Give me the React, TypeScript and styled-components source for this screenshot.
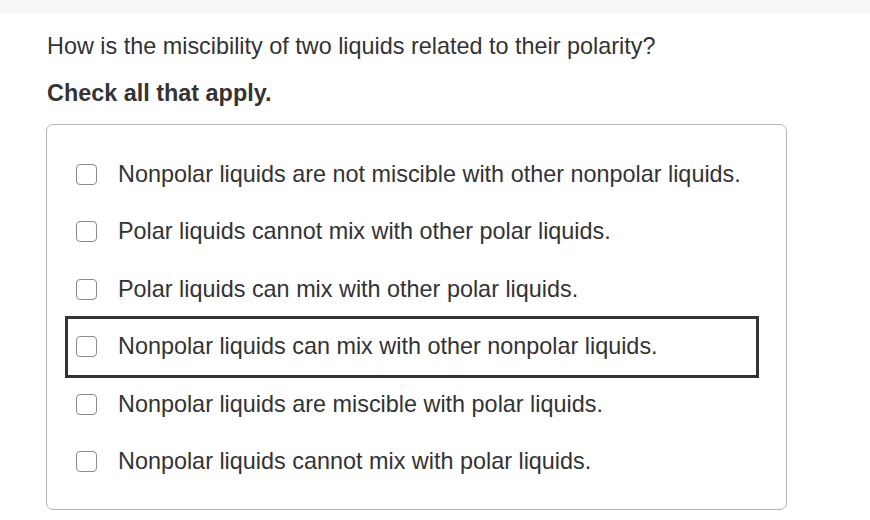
import React, { useState } from 'react';
import styled, { createGlobalStyle } from 'styled-components';

const GlobalStyle = createGlobalStyle`
  html, body {
    margin: 0;
    padding: 0;
    background: #fff;
    font-family: "Liberation Sans", Arial, sans-serif;
    color: #333;
  }
`;

const TopBar = styled.div`
  height: 13px;
  background-color: #f7f7f7;
`;

const Content = styled.div`
  padding: 20px 0 0 47px;
`;

const Question = styled.p`
  margin: 0;
  font-size: 23.4px;
  line-height: 27px;
  color: #333;
`;

const Instruction = styled.p`
  margin: 19.5px 0 0;
  font-size: 23.4px;
  line-height: 27px;
  font-weight: bold;
  color: #333;
`;

const ChoiceBox = styled.div`
  box-sizing: border-box;
  margin: 17.5px 0 0 -1px;
  width: 741px;
  height: 386px;
  border: 1px solid #b5b5b5;
  border-radius: 7px;
  padding: 21px 30px 0 21px;
  display: flex;
  flex-direction: column;
  gap: 1.5px;
`;

const Row = styled.label<{ $focused: boolean }>`
  display: flex;
  align-items: center;
  gap: 21px;
  height: 56px;
  padding-left: 8px;
  cursor: pointer;
  outline: ${(p) => (p.$focused ? '3px solid #333' : 'none')};
`;

const Box = styled.span`
  box-sizing: border-box;
  width: 21px;
  height: 21px;
  flex-shrink: 0;
  border: 1.5px solid #8a8a8a;
  border-radius: 4px;
  background: #fff;
`;

const RowText = styled.span`
  font-size: 23.4px;
  line-height: 27px;
  color: #333;
`;

const options = [
  'Nonpolar liquids are not miscible with other nonpolar liquids.',
  'Polar liquids cannot mix with other polar liquids.',
  'Polar liquids can mix with other polar liquids.',
  'Nonpolar liquids can mix with other nonpolar liquids.',
  'Nonpolar liquids are miscible with polar liquids.',
  'Nonpolar liquids cannot mix with polar liquids.',
];

const App: React.FC = () => {
  const [focused] = useState(3);

  return (
    <>
      <GlobalStyle />
      <TopBar />
      <Content>
        <Question>How is the miscibility of two liquids related to their polarity?</Question>
        <Instruction>Check all that apply.</Instruction>
        <ChoiceBox>
          {options.map((text, i) => (
            <Row key={text} $focused={i === focused}>
              <Box />
              <RowText>{text}</RowText>
            </Row>
          ))}
        </ChoiceBox>
      </Content>
    </>
  );
};

export default App;
